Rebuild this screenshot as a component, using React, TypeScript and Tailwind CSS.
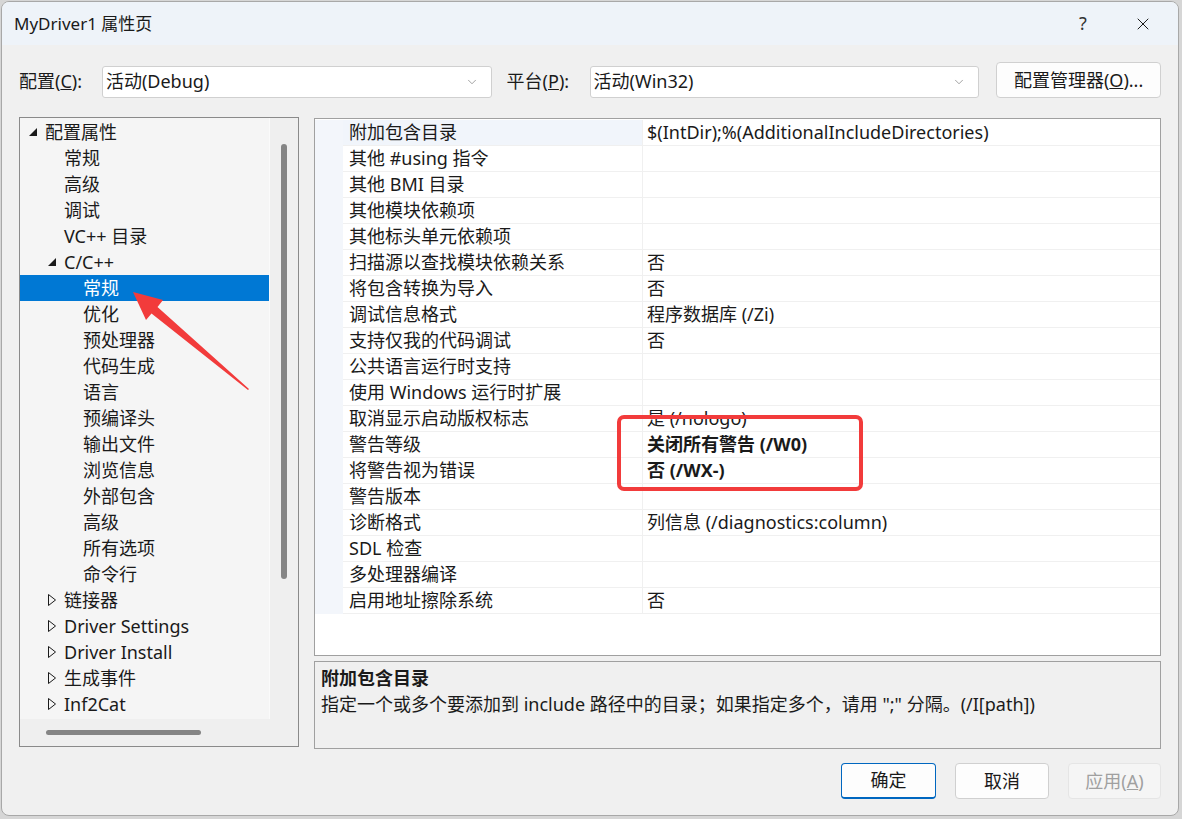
import * as React from "react";
import { ChevronDown, X } from "lucide-react";

type TreeItem = { label: string; level: number; toggle?: "open" | "closed"; selected?: boolean };

const treeItems: TreeItem[] = [
    { label: "配置属性", level: 0, toggle: "open" },
    { label: "常规", level: 1 },
    { label: "高级", level: 1 },
    { label: "调试", level: 1 },
    { label: "VC++ 目录", level: 1 },
    { label: "C/C++", level: 1, toggle: "open" },
    { label: "常规", level: 2, selected: true },
    { label: "优化", level: 2 },
    { label: "预处理器", level: 2 },
    { label: "代码生成", level: 2 },
    { label: "语言", level: 2 },
    { label: "预编译头", level: 2 },
    { label: "输出文件", level: 2 },
    { label: "浏览信息", level: 2 },
    { label: "外部包含", level: 2 },
    { label: "高级", level: 2 },
    { label: "所有选项", level: 2 },
    { label: "命令行", level: 2 },
    { label: "链接器", level: 1, toggle: "closed" },
    { label: "Driver Settings", level: 1, toggle: "closed" },
    { label: "Driver Install", level: 1, toggle: "closed" },
    { label: "生成事件", level: 1, toggle: "closed" },
    { label: "Inf2Cat", level: 1, toggle: "closed" },
];

const props: { name: string; value?: string; bold?: boolean }[] = [
    { name: "附加包含目录", value: "$(IntDir);%(AdditionalIncludeDirectories)" },
    { name: "其他 #using 指令" },
    { name: "其他 BMI 目录" },
    { name: "其他模块依赖项" },
    { name: "其他标头单元依赖项" },
    { name: "扫描源以查找模块依赖关系", value: "否" },
    { name: "将包含转换为导入", value: "否" },
    { name: "调试信息格式", value: "程序数据库 (/Zi)" },
    { name: "支持仅我的代码调试", value: "否" },
    { name: "公共语言运行时支持" },
    { name: "使用 Windows 运行时扩展" },
    { name: "取消显示启动版权标志", value: "是 (/nologo)" },
    { name: "警告等级", value: "关闭所有警告 (/W0)", bold: true },
    { name: "将警告视为错误", value: "否 (/WX-)", bold: true },
    { name: "警告版本" },
    { name: "诊断格式", value: "列信息 (/diagnostics:column)" },
    { name: "SDL 检查" },
    { name: "多处理器编译" },
    { name: "启用地址擦除系统", value: "否" },
];

function Toggle({ kind }: { kind?: "open" | "closed" }) {
    if (!kind) return <span className="w-[20px] shrink-0" />;
    return (
        <span className="w-[20px] shrink-0 flex items-center justify-start pl-[2px]">
            {kind === "open" ? (
                <svg width="9" height="9" viewBox="0 0 9 9">
                    <polygon points="8,0 8,8 0,8" fill="#1a1a1a" />
                </svg>
            ) : (
                <svg width="8" height="12" viewBox="0 0 8 12">
                    <polygon points="0.5,0.5 7.5,6 0.5,11.5" fill="none" stroke="#1a1a1a" strokeWidth="1" />
                </svg>
            )}
        </span>
    );
}

function Dropdown({ text, width }: { text: string; width: string }) {
    return (
        <div className={`${width} h-[32px] bg-white border border-[#d0d0d0] rounded-[3px] flex items-center pl-[3px] pr-[12px]`}>
            <span className="flex-1">{text}</span>
            <ChevronDown className="w-[14px] h-[14px] text-[#606060]" strokeWidth={1} />
        </div>
    );
}

export default function App() {
    return (
        <div className="relative w-[1182px] h-[819px] bg-[#d6d6d6] pl-[1px] pt-[1px] pr-[3px] pb-[3px] text-[18px] text-[#1a1a1a] font-['Noto_Sans','Noto_Sans_CJK_SC',sans-serif] overflow-hidden">
            <div className="h-full rounded-[8px] border border-[#a8a8a8] bg-[#f0f0f0] overflow-hidden flex flex-col">
                {/* title bar */}
                <div className="h-[43px] shrink-0 bg-[#eef3f9] flex items-center pl-[12px]">
                    <span className="flex-1 text-[17px]">MyDriver1 属性页</span>
                    <span className="w-[50px] text-center text-[18px] text-[#333]">?</span>
                    <span className="w-[70px] flex justify-center">
                        <X className="w-[20px] h-[20px]" strokeWidth={1.2} />
                    </span>
                </div>

                {/* config row */}
                <div className="flex items-center mt-[20px] pl-[17px] pr-[17px] h-[33px]">
                    <span className="w-[83px]">配置(<span className="underline">C</span>):</span>
                    <Dropdown text="活动(Debug)" width="w-[390px]" />
                    <span className="ml-[15px] w-[83px]">平台(<span className="underline">P</span>):</span>
                    <Dropdown text="活动(Win32)" width="w-[390px]" />
                    <div className="ml-[17px] w-[165px] h-[36px] -mt-[3px] bg-[#fdfdfd] border border-[#d0d0d0] rounded-[4px] flex items-center justify-center">
                        配置管理器(<span className="underline">O</span>)...
                    </div>
                </div>

                {/* main area */}
                <div className="flex mt-[19px] pl-[17px] pr-[17px] gap-[15px]">
                    {/* tree */}
                    <div className="w-[280px] h-[630px] border border-[#8a8a8a] flex flex-col shrink-0">
                        <div className="flex flex-1 min-h-0">
                            <div className="w-[250px] bg-[#f5f5f5] border-r border-[#fafafa] pt-[1px]">
                                {treeItems.map((t, i) => (
                                    <div
                                        key={i}
                                        className={`h-[26px] flex items-center ${t.selected ? "bg-[#0078d4] text-white" : ""}`}
                                        style={{ paddingLeft: 7 + t.level * 19 }}
                                    >
                                        <Toggle kind={t.toggle} />
                                        <span className="-ml-[2px]">{t.label}</span>
                                    </div>
                                ))}
                            </div>
                            <div className="flex-1 bg-[#efefef] flex justify-center pt-[26px]">
                                <div className="w-[6px] h-[435px] rounded-full bg-[#858585]" />
                            </div>
                        </div>
                        <div className="h-[27px] bg-[#efefef] flex items-center pl-[26px]">
                            <div className="w-[155px] h-[5px] rounded-full bg-[#858585]" />
                        </div>
                    </div>

                    {/* right column */}
                    <div className="flex-1 flex flex-col gap-[5px] pt-[1px]">
                        <div className="h-[538px] border border-[#a0a0a0] bg-white pt-[1px]">
                            {props.map((p, i) => (
                                <div key={i} className="h-[26px] flex">
                                    <div className="w-[28px] bg-[#f3f6fb] shrink-0" />
                                    <div
                                        className={`w-[300px] shrink-0 flex items-center pl-[6px] border-b border-r border-[#f0f0f0] ${i === 0 ? "bg-[#f1f5fb]" : ""}`}
                                    >
                                        {p.name}
                                    </div>
                                    <div className={`flex-1 flex items-center pl-[4px] border-b border-[#f0f0f0] ${p.bold ? "font-bold" : ""}`}>
                                        {p.value}
                                    </div>
                                </div>
                            ))}
                        </div>
                        <div className="h-[88px] border border-[#a0a0a0] bg-[#f0f0f0] px-[6px] pt-[3px]">
                            <div className="font-bold leading-[26px]">附加包含目录</div>
                            <div className="leading-[26px]">指定一个或多个要添加到 include 路径中的目录；如果指定多个，请用 ";" 分隔。(/I[path])</div>
                        </div>
                    </div>
                </div>

                {/* buttons */}
                <div className="flex justify-end gap-[19px] pr-[17px] mt-[14px]">
                    <div className="w-[95px] h-[36px] rounded-[4px] bg-[#fdfdfd] border border-[#0067c0] border-b-2 flex items-center justify-center">确定</div>
                    <div className="w-[94px] h-[36px] rounded-[4px] bg-[#fdfdfd] border border-[#d0d0d0] flex items-center justify-center">取消</div>
                    <div className="w-[93px] h-[36px] rounded-[4px] bg-[#f5f5f5] border border-[#e5e5e5] text-[#a0a0a0] flex items-center justify-center">
                        应用(<span className="underline">A</span>)
                    </div>
                </div>
            </div>

            {/* annotation: red box */}
            <div className="absolute left-[617px] top-[415px] w-[246px] h-[76px] border-[4px] border-[#f23b3b] rounded-[7px] pointer-events-none" />

            {/* annotation: red arrow */}
            <svg className="absolute left-0 top-0 pointer-events-none" width="1182" height="819">
                <polygon
                    points="133,292 163,300 157.5,307 249,389 248,390 151.5,313.5 146,320"
                    fill="#f23b3b"
                />
            </svg>
        </div>
    );
}
